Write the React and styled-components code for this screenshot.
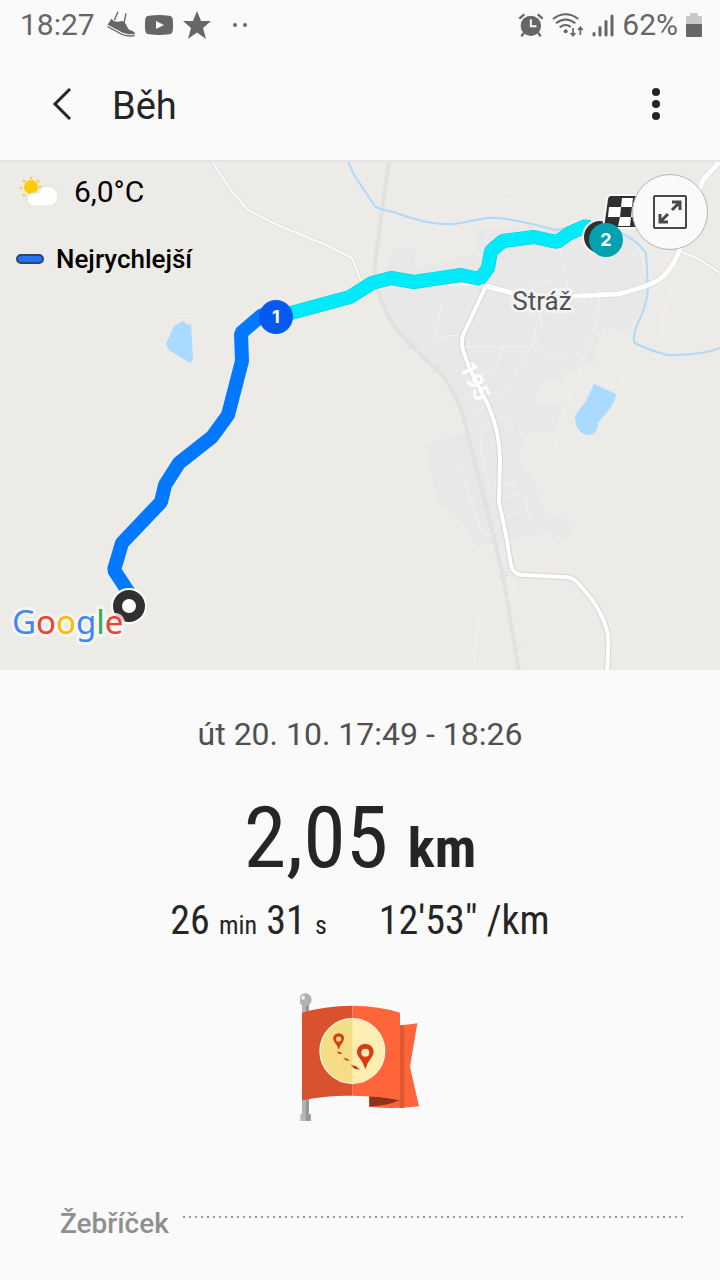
import React from "react";
import styled, { createGlobalStyle } from "styled-components";

const GlobalStyle = createGlobalStyle`
  *, *::before, *::after { box-sizing: border-box; }
  body {
    margin: 0;
    background: #fafafa;
    color: #252525;
    font-family: Roboto, "Noto Sans", sans-serif;
  }
`;

const condensed = `"Roboto Condensed", Roboto, "Noto Sans", sans-serif`;

const Page = styled.div`
  display: flex;
  flex-direction: column;
  min-height: 100vh;
  overflow: hidden;
`;

const StatusBar = styled.div`
  display: flex;
  align-items: center;
  justify-content: space-between;
  height: 50px;
  padding: 0 18px 0 20px;
  color: #666;
  font-size: 30px;
  line-height: 40px;
`;

const StatusGroup = styled.div`
  display: flex;
  align-items: center;
  gap: ${(p) => p.$gap}px;
`;

const Clock = styled.span`
  padding-right: 2px;
`;

const Icon = styled.svg`
  display: block;
  flex: none;
`;

const AppBar = styled.header`
  display: flex;
  align-items: center;
  height: 110px;
  padding: 0 40px 2px 38px;
`;

const IconButton = styled.button`
  display: flex;
  align-items: center;
  justify-content: center;
  width: 48px;
  height: 64px;
  padding: 0;
  border: 0;
  background: none;
  color: #252525;
`;

const Title = styled.h1`
  flex: 1;
  margin: 0;
  padding: 4px 0 0 26px;
  font-size: 38px;
  font-weight: 400;
  line-height: 48px;
`;

const MapPanel = styled.section`
  position: relative;
  height: 510px;
  border-top: 2px solid #e4e4e6;
  background: #ecebe7;
`;

const MapDrawing = styled.svg`
  display: block;
  width: 100%;
  height: 100%;
`;

const MapInfo = styled.div`
  position: absolute;
  top: 8px;
  left: 16px;
  display: flex;
  flex-direction: column;
  gap: 24px;
  color: #000;
`;

const Weather = styled.div`
  display: flex;
  align-items: center;
  gap: 16px;
  padding-left: 2px;
  font-size: 30px;
  line-height: 44px;
`;

const Legend = styled.div`
  display: flex;
  align-items: center;
  gap: 12px;
  font-size: 26px;
  font-weight: 500;
  line-height: 42px;
`;

const LegendSwatch = styled.span`
  width: 28px;
  height: 10px;
  border: 2px solid #2f4468;
  border-radius: 5px;
  background: #2472f8;
`;

const ExpandButton = styled.button`
  position: absolute;
  top: 12px;
  right: 12px;
  display: flex;
  align-items: center;
  justify-content: center;
  width: 76px;
  height: 76px;
  padding: 0;
  border: 1px solid #b4b4b4;
  border-radius: 50%;
  background: #fafafa;
`;

const Summary = styled.section`
  display: flex;
  flex-direction: column;
  align-items: center;
  padding-top: 44px;
`;

const WorkoutTime = styled.p`
  margin: 0;
  color: #505050;
  font-size: 32px;
  line-height: 40px;
`;

const Distance = styled.p`
  margin: 32px 0 0;
  font-family: ${condensed};
  font-size: 86px;
  font-weight: 400;
  line-height: 104px;
`;

const DistanceUnit = styled.span`
  font-size: 56px;
  font-weight: 700;
`;

const Metrics = styled.div`
  display: flex;
  align-items: baseline;
  gap: 52px;
  font-family: ${condensed};
  font-size: 40px;
  line-height: 42px;
`;

const Small = styled.span`
  font-size: 26px;
`;

const Badge = styled.div`
  margin-top: 46px;
`;

const SectionHead = styled.div`
  display: flex;
  align-items: center;
  gap: 14px;
  margin-top: 82px;
  padding: 0 36px 0 60px;
`;

const SectionTitle = styled.h2`
  margin: 0;
  color: #8f8f8f;
  font-size: 28px;
  font-weight: 500;
  line-height: 40px;
`;

const DottedRule = styled.div`
  flex: 1;
  height: 2px;
  margin-bottom: 14px;
  background: repeating-linear-gradient(to right, #9c9c9c 0 2px, transparent 2px 6px);
`;

function ShoeIcon() {
  return (
    <Icon width="28" height="28" viewBox="320 32 84 84">
      <g fill="none" stroke="#666" strokeWidth="4">
        <path d="M353 34 342 60M377 39 371 68" />
      </g>
      <path fill="#666" d="M322 73 333 55Q340 65 352 64L368 62Q377 69 381 81L387 89Q401 92 404 99L402 103Q384 105 368 98Z" />
      <path fill="none" stroke="#666" strokeWidth="4" d="M321 78 365 102Q383 109 403 106" />
      <path fill="none" stroke="#fafafa" strokeWidth="2" d="M322 75 366 99Q384 105 402 102" />
    </Icon>
  );
}

function YoutubeIcon() {
  return (
    <Icon width="28" height="20" viewBox="0 0 28 20">
      <path fill="#666" d="M4 .7Q14-.6 24 .7 27.300 1 27.700 4 28.400 10 27.700 16 27.300 19 24 19.300 14 20.600 4 19.300.7 19 .3 16-.4 10 .3 4 .7 1 4 .7Z" />
      <path fill="#fafafa" d="M11 6v8l8-4z" />
    </Icon>
  );
}

function StarIcon() {
  return (
    <Icon width="28" height="28" viewBox="0 0 28 28">
      <path fill="#666" d="M14 0 18 10H28L20 17 23 28 14 21.500 5 28 8 17 0 10H10Z" />
    </Icon>
  );
}

function MoreDots() {
  return (
    <Icon width="36" height="6" viewBox="0 0 36 6" fill="#666">
      <circle cx="14" cy="3" r="2" />
      <circle cx="24" cy="3" r="2" />
    </Icon>
  );
}

function AlarmIcon() {
  return (
    <Icon width="26" height="24" viewBox="56 36 77 73">
      <circle cx="94" cy="75" r="31" fill="#666" />
      <path stroke="#666" strokeWidth="7" d="M59 53 74 40M115 40 130 53M73 96 65 107M116 96 124 107" />
      <path fill="none" stroke="#fafafa" strokeWidth="6" d="M94 55V76H111" />
    </Icon>
  );
}

function WifiIcon() {
  return (
    <Icon width="32" height="24" viewBox="159 35 96 72">
      <g fill="none" stroke="#666" strokeWidth="6">
        <path d="M162 53Q200 25 238 53" />
        <path d="M171 66Q200 43 229 66" />
        <path d="M182 78Q200 65 215 77" />
        <path strokeWidth="5" d="M222 80V101M215 95 222 103 229 95M244 101V80M237 86 244 78 251 86" />
      </g>
      <circle cx="200" cy="90" r="6" fill="#666" />
    </Icon>
  );
}

function SignalIcon() {
  return (
    <Icon width="22" height="23" viewBox="0 0 22 23">
      <path fill="none" stroke="#666" strokeWidth="3" strokeLinecap="round" d="M2 19.500V21M8 13.500V21M14 7.500V21M20 2V21" />
    </Icon>
  );
}

function BatteryIcon() {
  return (
    <Icon width="16" height="24" viewBox="0 0 16 24">
      <path fill="#c8c8c8" d="M4 1Q4 0 5 0H11Q12 0 12 1V3H15Q16 3 16 4V12H0V4Q0 3 1 3H4Z" />
      <path fill="#666" d="M0 11H16V23Q16 24 15 24H1Q0 24 0 23Z" />
    </Icon>
  );
}

function WeatherIcon() {
  return (
    <Icon width="40" height="32" viewBox="0 0 40 32">
      <g stroke="#f2d24a" strokeWidth="3" strokeLinecap="round">
        <path d="M13 2v0M20 5v0M22 11v0M6 5v0M3 12v0M6 19v0" />
      </g>
      <circle cx="13" cy="11" r="7" fill="#fc0" />
      <path fill="#fff" stroke="#e3e3e1" d="M15 30Q9 29 9 23 10 17 16 17 19 17 20 18 22 10 29 10 39 11 40 20 39 29 32 30Z" />
    </Icon>
  );
}

function Marker({ x, y, color, children }) {
  return (
    <g>
      <circle cx={x} cy={y} r="17" fill={color} />
      <text x={x} y={y + 6} textAnchor="middle" fill="#fff" fontFamily="Inter, Roboto, sans-serif" fontSize="18" fontWeight="700">
        {children}
      </text>
    </g>
  );
}

function RouteMap() {
  const logo = (
    <>
      <tspan fill="#4285f4">G</tspan>
      <tspan fill="#ea4335">o</tspan>
      <tspan fill="#fbbc05">o</tspan>
      <tspan fill="#4285f4">g</tspan>
      <tspan fill="#34a853">l</tspan>
      <tspan fill="#ea4335">e</tspan>
    </>
  );
  const mainRoad =
    "M486 286 463 335Q461 342 463 350L469 367 488 405Q500 432 500 460L499 502 507 540 511 566Q514 575 524 575L564 577Q572 577 577 582L590 597Q604 615 608 635 609 644 607 672";
  const eastRoad =
    "M486 286 512 293 560 297 618 294Q648 287 660 279 670 272 679 252L692 208 703 180 720 161";
  return (
    <MapDrawing viewBox="0 162 720 508" preserveAspectRatio="xMidYMid slice" role="img" aria-label="Trasa běhu">
      <path fill="#e8e8e8" d="M395 247 416 248 414 268 475 253V231L500 228 560 227 620 230 638 250 648 290 640 315 623 332 603 325 593 363 567 373 563 382 543 380 532 403 563 405 554 433 528 432 517 458 530 475 548 517 566 513 573 533 557 546 550 532 512 540 477 547 465 525 437 502 425 444 472 433 462 410 453 393 437 370 410 345 391 323 378 290Z" />
      <g fill="none" stroke="#e1e1e2" strokeWidth="4">
        <path d="M389 162 382 210 375 263Q373 290 392 323 400 336 437 370 459 392 468 435L486 505 503 576 519 672" />
        <path strokeWidth="2" d="M407 349 414 342M433 373 440 366M463 437 472 434M481 507 490 504M499 577 508 575M512 650 521 647" />
      </g>
      <g fill="none" stroke="#f1f1f0" strokeWidth="1">
        <path d="M88 351Q100 330 130 323L155 320Q190 312 197 318L202 325 225 325 245 316" />
        <path d="M441 305 435 341 418 351 402 370Q396 373 390 367M435 341 446 336 463 335M463 347H486L531 347 570 359 585 374 620 390M504 347 490 375 465 398M552 282Q543 278 531 287L541 310 531 347M541 310V330L531 347 504 393 484 406 471 415M560 245 568 290M465 208 485 218 484 225H491V233H485L487 250M490 194Q530 190 550 205 560 215 558 230M599 301 597 320 582 360 580 374 563 415 555 448M564 372 620 387 630 365M640 250 648 278 670 288 661 325 672 358M630 370 640 358 670 354" />
        <path d="M454 457Q462 466 465 480L482 532Q490 542 498 526L502 518M492 422Q480 427 480 447L490 492Q494 505 501 499L517 494Q528 492 528 510L532 522M506 516 528 511M501 484H517M492 422 511 410M502 415 513 431M513 578V593Q510 600 495 600 479 608 477 630L473 670M609 645 652 668" />
      </g>
      <g fill="none" stroke="#f7f7f7" strokeWidth="1">
        <path d="M578 292V302M584 290V303M590 292V301M599 290V300M607 293V297M615 292V296" />
      </g>
      <g fill="#aadaff">
        <path d="M174 326 183 321 188 325 191 324 193 359 190 363 169 350 166 344Z" />
        <path d="M594 384 616 394Q615 403 607 412L598 423Q597 436 587 435 575 432 575 416L586 401Z" />
      </g>
      <path fill="none" stroke="#b0d9f9" strokeWidth="2" d="M348 161 353 173 374 205Q376 209 394 212 430 226 455 224L487 218Q500 216 540 226L555 230 585 226 615 230Q635 238 646 253L648 290Q647 305 637 325 632 340 635 343 648 350 667 355 700 356 720 348" />
      <g fill="none" strokeLinejoin="round">
        <path stroke="#dfe0e2" strokeWidth="4" d="M212 161 230 189 248 210 275 224 326 245 352 258 361 281M679 251 697 258 720 273" />
        <path stroke="#fafafa" strokeWidth="2" d="M212 161 230 189 248 210 275 224 326 245 352 258 361 281M679 251 697 258 720 273M430 286 470 284 486 286" />
        <path stroke="#d3d5d9" strokeWidth="6" d={mainRoad} />
        <path stroke="#d3d5d9" strokeWidth="6" d={eastRoad} />
        <path stroke="#fff" strokeWidth="4" d={mainRoad} />
        <path stroke="#fff" strokeWidth="5" d={eastRoad} />
      </g>
      <text x="0" y="8" textAnchor="middle" transform="translate(475 381) rotate(64)" fill="#fff" fontFamily="Roboto, sans-serif" fontSize="23" fontWeight="700">
        195
      </text>
      <text x="542" y="310" textAnchor="middle" fill="#4d5359" stroke="#f3f3f3" strokeWidth="6" strokeLinejoin="round" paintOrder="stroke" fontFamily="Roboto, sans-serif" fontSize="26">
        Stráž
      </text>

      <path fill="none" stroke="#08ccd8" strokeWidth="14" strokeLinejoin="bevel" d="M276 317 350 297 372 283 391 278 414 282 461 275 480 279 488 268 491 251 503 241 534 237 557 242 570 233 586 226 598 232" />
      <path fill="none" stroke="#00ebfa" strokeWidth="13" strokeLinejoin="bevel" d="M276 317 350 297 372 283 391 278 414 282 461 275 480 279 488 268 491 251 503 241 534 237 557 242 570 233 586 226 598 232" />
      <path fill="none" stroke="#0078ff" strokeWidth="14" strokeLinejoin="bevel" d="M129 593 114 570 122 543 161 502 165 485 179 463 212 437 228 415 242 361 241 333 262 315 276 316" />

      <circle cx="600" cy="237" r="17" fill="#303030" stroke="#f4f4f4" strokeWidth="2" />
      <path fill="#303030" stroke="#f7f7f7" strokeWidth="2" d="M611 195H648V228H603L607 199Q608 195 611 195Z" />
      <path fill="#fff" d="M622 198H633L632 207H621ZM609 207H621L620 217H608ZM632 207H644V217H631ZM620 217H631L630 226H618Z" />
      <Marker x={276} y={317} color="#0559ee">1</Marker>
      <Marker x={606} y={240} color="#00a2b1">2</Marker>

      <circle cx="129" cy="606" r="17" fill="#303030" stroke="#fff" strokeWidth="2" />
      <circle cx="129" cy="606" r="7" fill="#fff" />
      <text x="12" y="634" fontFamily="'Noto Sans', sans-serif" fontSize="33" stroke="#f8f8f8" strokeOpacity=".8" strokeWidth="6" strokeLinejoin="round" paintOrder="stroke">
        {logo}
      </text>
    </MapDrawing>
  );
}

function MapPin({ x, y, scale }) {
  return (
    <path
      transform={`translate(${x} ${y}) scale(${scale})`}
      fill="#d83c12"
      fillRule="evenodd"
      d="M0 50Q-6 30-19 14C-34-8-18-26 0-26S34-8 19 14Q6 30 0 50ZM0-12A12 12 0 1 0 0 12 12 12 0 0 0 0-12Z"
    />
  );
}

function FlagBadge() {
  return (
    <Icon width="120" height="130" viewBox="60 36 360 390" role="img" aria-label="Odznak trasy">
      <path fill="#b4b4b4" d="M66 75H87V405H66Z" />
      <path fill="#989898" d="M77 75H87V405H77Z" />
      <path fill="#b8b8b8" d="M61 402H92V423H61Z" />
      <path fill="#999" d="M77 402H92V423H77Z" />
      <circle cx="76" cy="59" r="19" fill="#b2b2b2" />
      <circle cx="69" cy="53" r="6" fill="#ededed" />
      <path fill="#ff653a" d="M358 136Q386 134 412 130L390 260 417 379Q340 389 268 380V345H358Z" />
      <path fill="#e05730" d="M358 136H373V384H358Z" />
      <path fill="#8f321b" d="M268 345 360 360Q325 377 268 380Z" />
      <path fill="#d9522d" d="M66 98Q130 78 217 77V347Q130 346 66 361Z" />
      <path fill="#ff653a" d="M217 77Q300 78 360 98V361Q300 348 217 347Z" />
      <circle cx="217" cy="213" r="96" fill="#ffeeb1" />
      <path fill="#f4dd85" d="M217 117A96 96 0 0 0 217 309Z" />
      <circle cx="217" cy="213" r="97" fill="none" stroke="#fffbe9" strokeWidth="4" />
      <MapPin x={176} y={177} scale={0.65} />
      <MapPin x={256} y={218} scale={1} />
      <g fill="#c93c17">
        <path d="M170 215 181 216 187 222 176 221ZM189 233 202 236 210 243 197 241ZM212 254 229 259 240 269 223 266Z" />
      </g>
    </Icon>
  );
}

export default function App() {
  return (
    <Page>
      <GlobalStyle />
      <StatusBar>
        <StatusGroup $gap={10}>
          <Clock>18:27</Clock>
          <ShoeIcon />
          <YoutubeIcon />
          <StarIcon />
          <MoreDots />
        </StatusGroup>
        <StatusGroup $gap={8}>
          <AlarmIcon />
          <WifiIcon />
          <SignalIcon />
          <span>62%</span>
          <BatteryIcon />
        </StatusGroup>
      </StatusBar>

      <AppBar>
        <IconButton aria-label="Zpět">
          <Icon width="20" height="32" viewBox="0 0 20 32">
            <path fill="none" stroke="currentColor" strokeWidth="3" d="M18 1 3 16 18 31" />
          </Icon>
        </IconButton>
        <Title>Běh</Title>
        <IconButton aria-label="Další možnosti">
          <Icon width="8" height="32" viewBox="0 0 8 32" fill="currentColor">
            <circle cx="4" cy="4" r="4" />
            <circle cx="4" cy="16" r="4" />
            <circle cx="4" cy="28" r="4" />
          </Icon>
        </IconButton>
      </AppBar>

      <MapPanel>
        <RouteMap />
        <MapInfo>
          <Weather>
            <WeatherIcon />
            6,0°C
          </Weather>
          <Legend>
            <LegendSwatch />
            Nejrychlejší
          </Legend>
        </MapInfo>
        <ExpandButton aria-label="Zvětšit mapu">
          <Icon width="34" height="34" viewBox="0 0 34 34" fill="none" stroke="#484848" strokeWidth="2">
            <rect x="1" y="1" width="32" height="32" rx="1" />
            <path strokeWidth="3" d="M19 15 27 7M19 7H27V15M15 19 7 27M7 19V27H15" />
          </Icon>
        </ExpandButton>
      </MapPanel>

      <Summary>
        <WorkoutTime>út 20. 10. 17:49 - 18:26</WorkoutTime>
        <Distance>
          2,05 <DistanceUnit>km</DistanceUnit>
        </Distance>
        <Metrics>
          <span>
            26 <Small>min</Small> 31 <Small>s</Small>
          </span>
          <span>12'53" /km</span>
        </Metrics>
        <Badge>
          <FlagBadge />
        </Badge>
      </Summary>

      <SectionHead>
        <SectionTitle>Žebříček</SectionTitle>
        <DottedRule />
      </SectionHead>
    </Page>
  );
}
